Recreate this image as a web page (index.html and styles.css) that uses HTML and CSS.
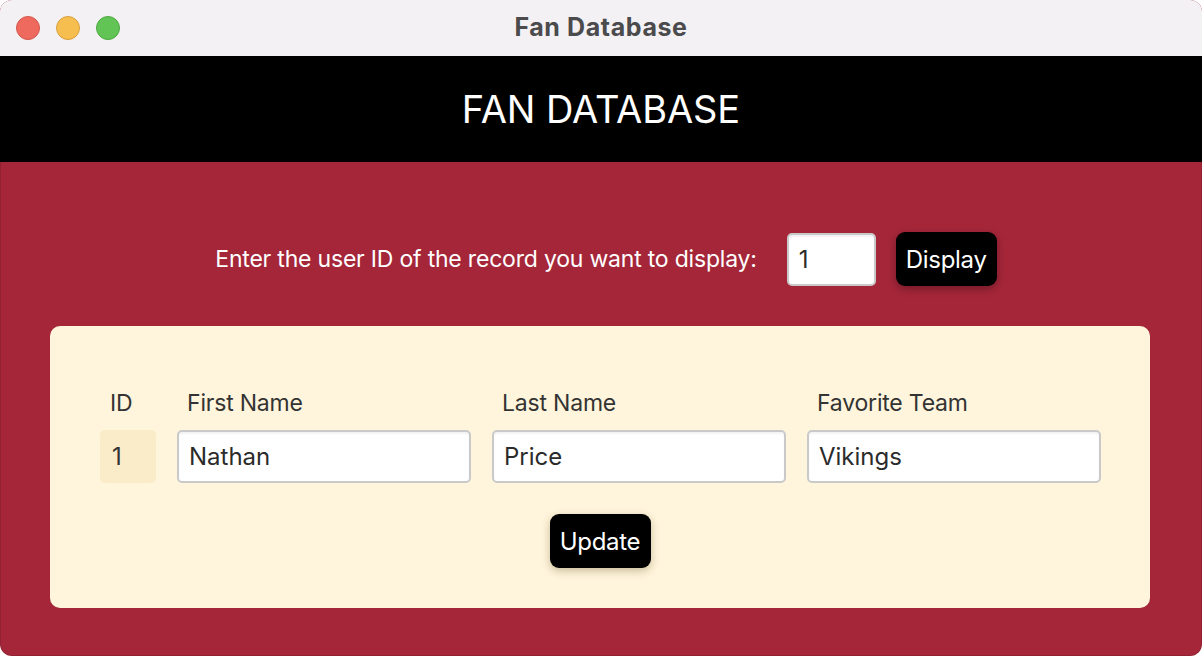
FILE: index.html
```html
<!DOCTYPE html>
<html>
<head>
<meta charset="utf-8">
<link rel="stylesheet" href="styles.css">
</head>
<body>
<div class="window">
  <div class="titlebar">
    <div class="lights">
      <span class="light red"></span>
      <span class="light yellow"></span>
      <span class="light green"></span>
    </div>
    <div class="title">Fan Database</div>
  </div>
  <div class="header">FAN DATABASE</div>
  <div class="main">
    <div class="search">
      <span class="prompt">Enter the user ID of the record you want to display:</span>
      <input class="field small" type="text" value="1">
      <button class="btn">Display</button>
    </div>
    <div class="card">
      <div class="grid">
        <div class="label">ID</div>
        <div class="label">First Name</div>
        <div class="label">Last Name</div>
        <div class="label">Favorite Team</div>
        <div class="idbox">1</div>
        <input class="field" type="text" value="Nathan">
        <input class="field" type="text" value="Price">
        <input class="field" type="text" value="Vikings">
      </div>
      <button class="btn">Update</button>
    </div>
  </div>
</div>
</body>
</html>
```
FILE: styles.css
```css
html, body {
  margin: 0;
  padding: 0;
  background: #ffffff;
}
body {
  width: 1202px;
  height: 656px;
  overflow: hidden;
  font-family: Inter, "Noto Sans", sans-serif;
}
.window {
  width: 1202px;
  height: 656px;
  box-sizing: border-box;
  border-radius: 12px;
  overflow: hidden;
  display: flex;
  flex-direction: column;
  background: #a52639;
  box-shadow: inset 0 0 0 1px rgba(0,0,0,0.12);
}
.titlebar {
  height: 56px;
  flex: none;
  background: #f3f1f4;
  position: relative;
  display: flex;
  align-items: center;
  justify-content: center;
}
.lights {
  position: absolute;
  left: 16px;
  top: 16px;
  display: flex;
  gap: 16px;
}
.light {
  width: 24px;
  height: 24px;
  border-radius: 50%;
  box-sizing: border-box;
}
.red { background: #ee6a5f; border: 1px solid #d65549; }
.yellow { background: #f5be4f; border: 1px solid #d9a03c; }
.green { background: #61c454; border: 1px solid #4ea842; }
.title {
  font-size: 25px;
  font-weight: 700;
  color: #4b4a4c;
  letter-spacing: 0.6px;
  margin-top: -2px;
}
.header {
  height: 106px;
  flex: none;
  background: #000;
  color: #fff;
  font-size: 38px;
  display: flex;
  align-items: center;
  justify-content: center;
  letter-spacing: -0.1px;
}
.main {
  flex: 1;
  display: flex;
  flex-direction: column;
  align-items: center;
  padding: 70px 0 0;
}
.search {
  display: flex;
  align-items: center;
  height: 54px;
  margin-left: 10px;
}
.prompt {
  color: #fff;
  font-size: 23px;
  letter-spacing: -0.2px;
  margin-right: 30px;
}
.field {
  height: 53px;
  box-sizing: border-box;
  border: 2px solid #c9c9c9;
  border-radius: 5px;
  background: #fff;
  font-family: inherit;
  font-size: 24px;
  color: #2b2b2b;
  padding: 0 10px;
  outline: none;
  box-shadow: inset 0 2px 2px rgba(0,0,0,0.05);
}
.field.small {
  width: 89px;
  height: 53px;
  margin-right: 20px;
}
.btn {
  height: 54px;
  padding: 0;
  background: #000;
  color: #fff;
  border: none;
  border-radius: 9px;
  font-family: inherit;
  font-size: 24px;
  letter-spacing: -0.3px;
  box-shadow: 0 3px 8px rgba(0,0,0,0.3);
  cursor: pointer;
}
.search .btn { width: 101px; }
.card {
  align-self: flex-start;
  margin: 40px 0 0 50px;
  width: 1100px;
  height: 282px;
  box-sizing: border-box;
  background: #fff5dc;
  border-radius: 10px;
  display: flex;
  flex-direction: column;
  align-items: center;
  padding-top: 62px;
}
.grid {
  align-self: flex-start;
  margin-left: 50px;
  display: grid;
  grid-template-columns: 56px 294px 294px 294px;
  column-gap: 21px;
  row-gap: 12px;
}
.grid .field { width: 100%; }
.label {
  font-size: 23px;
  color: #333;
  padding-left: 10px;
  letter-spacing: -0.2px;
  line-height: 30px;
}
.idbox {
  height: 53px;
  background: #faecc9;
  border-radius: 5px;
  font-size: 24px;
  color: #333;
  display: flex;
  align-items: center;
  padding-left: 12px;
  box-sizing: border-box;
}
.card .btn {
  margin-top: 31px;
  width: 101px;
  box-shadow: 0 3px 8px rgba(80,60,0,0.3);
}
```
